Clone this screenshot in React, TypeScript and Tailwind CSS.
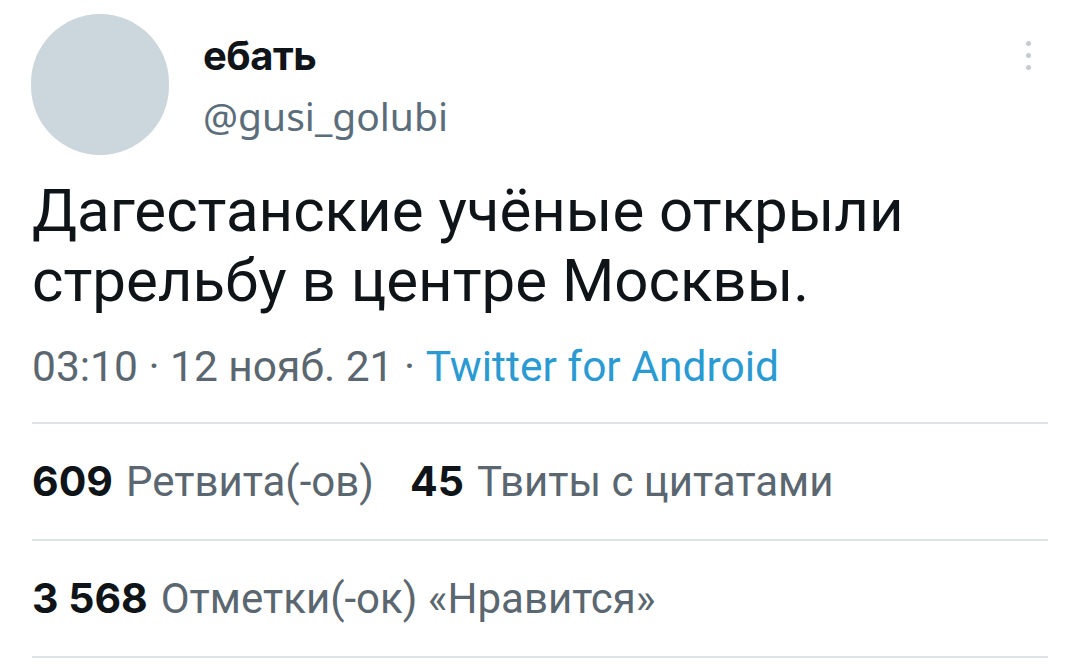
export default function App() {
  return (
    <div className="w-[1080px] h-[667px] bg-white overflow-hidden relative" style={{ fontFamily: 'Roboto, "Noto Sans", sans-serif' }}>
      <div className="flex pt-[14px] pl-[31px] pr-[30px]">
        <div className="w-[138px] h-[141px] rounded-full bg-[#ccd6dd] shrink-0" />
        <div className="flex flex-col ml-[34px] pt-[19px]">
          <div className="text-[40px] leading-[46px] font-bold text-[#0f1419] tracking-[-0.5px]" style={{ fontFamily: 'Inter, "Noto Sans", sans-serif' }}>ебать</div>
          <div className="text-[39px] leading-[46px] text-[#5b6d7a] mt-[14px]" style={{ fontFamily: '"Noto Sans", Inter, sans-serif' }}>@gusi_golubi</div>
        </div>
        <div className="ml-auto flex flex-col gap-[7px] pt-[27px] pr-[19px]">
          <span className="w-[5px] h-[5px] rounded-full bg-[#c3ccd3]" />
          <span className="w-[5px] h-[5px] rounded-full bg-[#c3ccd3]" />
          <span className="w-[5px] h-[5px] rounded-full bg-[#c3ccd3]" />
        </div>
      </div>
      <div className="pl-[32px] pr-[32px]">
        <div className="text-[60px] leading-[70px] text-[#0f1419] mt-[21px]">
          Дагестанские учёные открыли<br />стрельбу в центре Москвы.
        </div>
        <div className="text-[42.5px] leading-[48px] text-[#5b6770] mt-[27px]">
          03:10 · 12 нояб. 21 · <span className="text-[#2a9ad3]">Twitter for Android</span>
        </div>
        <div className="h-[2px] bg-[#dde3e7] mt-[31px]" />
        <div className="flex items-center h-[115px] text-[42px] text-[#5b6770]">
          <span className="font-bold text-[#0f1419] text-[41px]" style={{ fontFamily: 'Inter, sans-serif' }}>609</span>
          <span className="ml-[13px]">Ретвита(-ов)</span>
          <span className="font-bold text-[#0f1419] text-[41px] ml-[36px]" style={{ fontFamily: 'Inter, sans-serif' }}>45</span>
          <span className="ml-[13px]">Твиты с цитатами</span>
        </div>
        <div className="h-[2px] bg-[#dde3e7]" />
        <div className="flex items-center h-[115px] text-[42px] text-[#5b6770]">
          <span className="font-bold text-[#0f1419] text-[41px]" style={{ fontFamily: 'Inter, sans-serif' }}>3 568</span>
          <span className="ml-[13px]">Отметки(-ок) «Нравится»</span>
        </div>
        <div className="h-[2px] bg-[#dde3e7]" />
      </div>
    </div>
  );
}
